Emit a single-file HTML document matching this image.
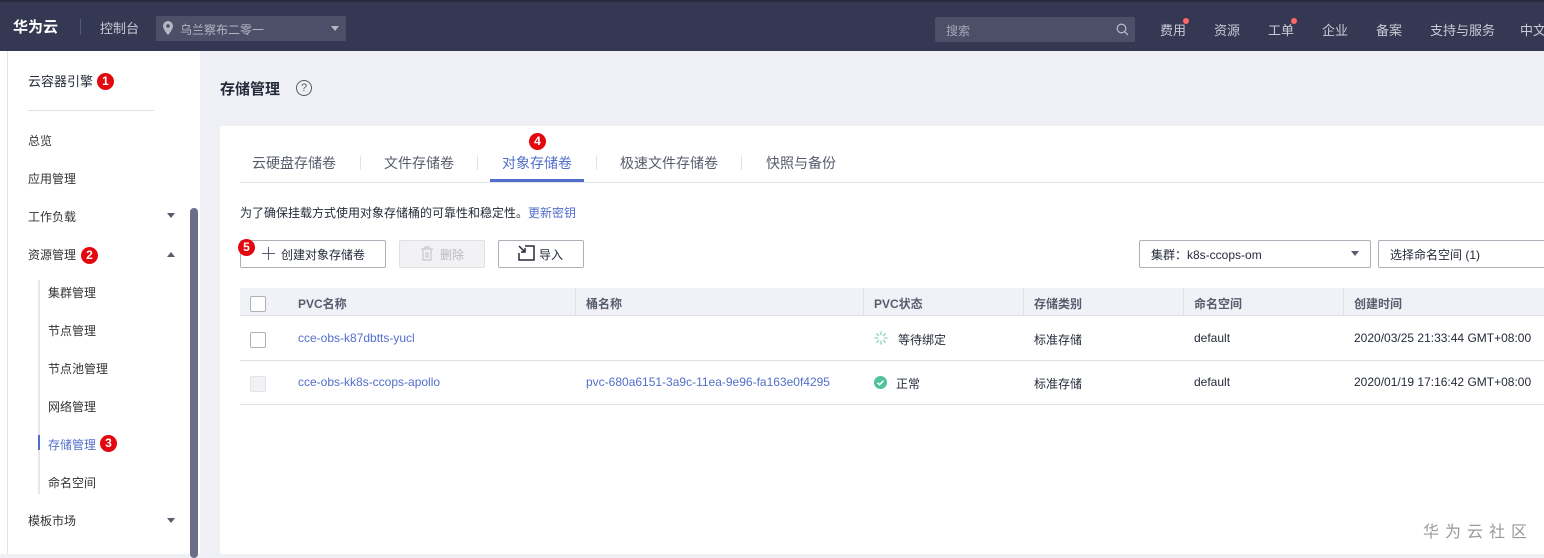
<!DOCTYPE html>
<html><head><meta charset="utf-8"><style>
*{margin:0;padding:0;box-sizing:border-box}
body{width:1544px;height:554px;overflow:hidden;background:#eef0f5;font-family:"Liberation Sans","Noto Sans CJK SC",sans-serif;font-size:12px;color:#252b3a;position:relative}
.a{position:absolute;white-space:nowrap}
.top{position:absolute;left:0;top:0;width:1544px;height:51px;background:#343852;border-top:2px solid #282b3f}
.tw{color:#c9cbd6;font-size:13px}
.bd{position:absolute;width:17px;height:17px;border-radius:50%;background:#e3070e;color:#fff;font-weight:bold;font-size:12px;text-align:center;line-height:17px}
.side{position:absolute;left:0;top:51px;width:200px;height:503px;background:#fff}
.m{position:absolute;font-size:12px;color:#333}
.card{position:absolute;left:220px;top:126px;width:1324px;height:428px;background:#fff}
.btn{position:absolute;height:28px;border:1px solid #adb0b8;background:#fff;border-radius:2px;font-size:12px;line-height:26px}
.cb{position:absolute;width:16px;height:16px;border:1px solid #adb0b8;border-radius:2px;background:#fff}
.lk{color:#526ecc}
.dv{position:absolute;width:1px;background:#e0e2e8}
.tb{position:absolute;top:27px;font-size:14px;color:#575d6c;white-space:nowrap}
</style></head><body>
<div class="top">
<div class="a" style="left:13px;top:14px;color:#fff;font-size:15px;font-weight:bold">华为云</div>
<div class="a" style="left:80px;top:17px;width:1px;height:16px;background:#555a75"></div>
<div class="a tw" style="left:100px;top:16px">控制台</div>
<div class="a" style="left:156px;top:14px;width:190px;height:25px;background:#4b4f68"></div>
<svg class="a" style="left:163px;top:19px" width="10" height="14" viewBox="0 0 10 14"><path d="M5 0a5 5 0 0 0-5 5c0 3.5 5 9 5 9s5-5.5 5-9a5 5 0 0 0-5-5z" fill="#b5b7c3"/><circle cx="5" cy="5" r="1.8" fill="#4b4f68"/></svg>
<div class="a" style="left:180px;top:19px;color:#b5b7c3;font-size:12px">乌兰察布二零一</div>
<div class="a" style="left:331px;top:24px;border:4px solid transparent;border-top:5px solid #b5b7c3"></div>
<div class="a" style="left:935px;top:15px;width:200px;height:25px;background:#4b4f68;border-radius:2px"></div>
<div class="a" style="left:946px;top:20px;color:#a5a8b8;font-size:12px">搜索</div>
<svg class="a" style="left:1116px;top:21px" width="13" height="13" viewBox="0 0 13 13"><circle cx="5.5" cy="5.5" r="4.3" fill="none" stroke="#b5b7c3" stroke-width="1.3"/><path d="M8.7 8.7L12 12" stroke="#b5b7c3" stroke-width="1.3"/></svg>
<div class="a tw" style="left:1160px;top:18px">费用</div><div class="a" style="left:1183px;top:16px;width:6px;height:6px;border-radius:50%;background:#f66"></div>
<div class="a tw" style="left:1214px;top:18px">资源</div>
<div class="a tw" style="left:1268px;top:18px">工单</div><div class="a" style="left:1291px;top:16px;width:6px;height:6px;border-radius:50%;background:#f66"></div>
<div class="a tw" style="left:1322px;top:18px">企业</div>
<div class="a tw" style="left:1376px;top:18px">备案</div>
<div class="a tw" style="left:1430px;top:18px">支持与服务</div>
<div class="a tw" style="left:1520px;top:18px">中文</div>
</div>
<div class="side">
<div class="a" style="left:7px;top:0;width:1px;height:503px;background:#e3e4ea"></div>
<div class="a" style="left:28px;top:20px;font-size:13px;color:#252b3a">云容器引擎</div>
<div class="bd" style="left:97px;top:22px">1</div>
<div class="a" style="left:28px;top:59px;width:126px;height:1px;background:#dfe1e6"></div>
<div class="m" style="left:28px;top:81px">总览</div>
<div class="m" style="left:28px;top:119px">应用管理</div>
<div class="m" style="left:28px;top:157px">工作负载</div>
<div class="a" style="left:167px;top:162px;border:4px solid transparent;border-top:5px solid #575d6c"></div>
<div class="m" style="left:28px;top:195px">资源管理</div>
<div class="bd" style="left:81px;top:196px">2</div>
<div class="a" style="left:167px;top:197px;border:4px solid transparent;border-bottom:5px solid #575d6c"></div>
<div class="a" style="left:38px;top:229px;width:2px;height:214px;background:#e6e7eb"></div>
<div class="a" style="left:38px;top:384px;width:2px;height:15px;background:#526ecc"></div>
<div class="m" style="left:48px;top:233px">集群管理</div>
<div class="m" style="left:48px;top:271px">节点管理</div>
<div class="m" style="left:48px;top:309px">节点池管理</div>
<div class="m" style="left:48px;top:347px">网络管理</div>
<div class="m" style="left:48px;top:385px;color:#526ecc">存储管理</div>
<div class="bd" style="left:100px;top:384px">3</div>
<div class="m" style="left:48px;top:423px">命名空间</div>
<div class="m" style="left:28px;top:461px">模板市场</div>
<div class="a" style="left:167px;top:467px;border:4px solid transparent;border-top:5px solid #575d6c"></div>
<div class="a" style="left:190px;top:157px;width:8px;height:350px;border-radius:4px;background:#6b6e88"></div>
</div>
<div class="a" style="left:220px;top:78px;font-size:15px;font-weight:bold;color:#252b3a">存储管理</div>
<div class="a" style="left:296px;top:80px;width:16px;height:16px;border:1.3px solid #575d6c;border-radius:50%;font-size:11px;text-align:center;line-height:14px;color:#575d6c">?</div>
<div class="card">
<div class="tb" style="left:32px">云硬盘存储卷</div>
<div class="dv" style="left:140px;top:30px;height:14px"></div>
<div class="tb" style="left:164px">文件存储卷</div>
<div class="dv" style="left:257px;top:30px;height:14px"></div>
<div class="tb" style="left:282px;color:#526ecc">对象存储卷</div>
<div class="bd" style="left:309px;top:7px">4</div>
<div class="a" style="left:270px;top:53px;width:94px;height:3px;background:#526ecc"></div>
<div class="dv" style="left:376px;top:30px;height:14px"></div>
<div class="tb" style="left:400px">极速文件存储卷</div>
<div class="dv" style="left:521px;top:30px;height:14px"></div>
<div class="tb" style="left:546px">快照与备份</div>
<div class="a" style="left:20px;top:56px;width:1304px;height:1px;background:#e3e4e9"></div>
<div class="a" style="left:20px;top:78px;color:#252b3a">为了确保挂载方式使用对象存储桶的可靠性和稳定性。<span class="lk">更新密钥</span></div>
<div class="btn" style="left:20px;top:114px;width:146px"></div>
<div class="a" style="left:42px;top:127px;width:13px;height:1.3px;background:#575d6c"></div>
<div class="a" style="left:48px;top:121px;width:1.3px;height:13px;background:#575d6c"></div>
<div class="a" style="left:61px;top:120px;color:#252b3a">创建对象存储卷</div>
<div class="bd" style="left:18px;top:113px">5</div>
<div class="btn" style="left:179px;top:114px;width:86px;background:#f2f2f4;border-color:#dfe1e6"></div>
<svg class="a" style="left:200px;top:120px" width="14" height="15" viewBox="0 0 14 15"><path d="M1 3h12M5 3V1h4v2M3 3v11h8V3M6 6v6M8 6v6" fill="none" stroke="#c6c8cf" stroke-width="1.2"/></svg>
<div class="a" style="left:220px;top:120px;color:#b8bac2">删除</div>
<div class="btn" style="left:278px;top:114px;width:86px"></div>
<svg class="a" style="left:298px;top:119px" width="17" height="16" viewBox="0 0 17 16"><path d="M7 1h9v14H1V8" fill="none" stroke="#252b3a" stroke-width="1.5"/><path d="M1 1l6 6M7 3v4H3" fill="none" stroke="#252b3a" stroke-width="1.5"/></svg>
<div class="a" style="left:319px;top:120px;color:#252b3a">导入</div>
<div class="btn" style="left:919px;top:114px;width:232px"></div>
<div class="a" style="left:931px;top:120px;color:#252b3a">集群：k8s-ccops-om</div>
<div class="a" style="left:1131px;top:125px;border:4px solid transparent;border-top:5px solid #575d6c"></div>
<div class="btn" style="left:1158px;top:114px;width:180px"></div>
<div class="a" style="left:1170px;top:120px;color:#252b3a">选择命名空间 (1)</div>
<div class="a" style="left:20px;top:162px;width:1304px;height:28px;background:#f0f2f7;border-bottom:1px solid #dfe1e6"></div>
<div class="cb" style="left:30px;top:170px"></div>
<div class="a" style="left:78px;top:169px;font-weight:bold;color:#575d6c">PVC名称</div>
<div class="dv" style="left:355px;top:162px;height:28px"></div>
<div class="a" style="left:366px;top:169px;font-weight:bold;color:#575d6c">桶名称</div>
<div class="dv" style="left:643px;top:162px;height:28px"></div>
<div class="a" style="left:654px;top:169px;font-weight:bold;color:#575d6c">PVC状态</div>
<div class="dv" style="left:803px;top:162px;height:28px"></div>
<div class="a" style="left:814px;top:169px;font-weight:bold;color:#575d6c">存储类别</div>
<div class="dv" style="left:963px;top:162px;height:28px"></div>
<div class="a" style="left:974px;top:169px;font-weight:bold;color:#575d6c">命名空间</div>
<div class="dv" style="left:1123px;top:162px;height:28px"></div>
<div class="a" style="left:1134px;top:169px;font-weight:bold;color:#575d6c">创建时间</div>
<div class="cb" style="left:30px;top:206px"></div>
<div class="a lk" style="left:78px;top:205px">cce-obs-k87dbtts-yucl</div>
<svg class="a" style="left:654px;top:205px" width="14" height="14" viewBox="0 0 14 14" stroke="#9fd9cb" stroke-width="1.6" stroke-linecap="round"><path d="M7 1v2.5M7 10.5V13M1 7h2.5M10.5 7H13M2.8 2.8l1.7 1.7M9.5 9.5l1.7 1.7M2.8 11.2l1.7-1.7M9.5 4.5l1.7-1.7"/></svg>
<div class="a" style="left:678px;top:205px">等待绑定</div>
<div class="a" style="left:814px;top:205px">标准存储</div>
<div class="a" style="left:974px;top:205px">default</div>
<div class="a" style="left:1134px;top:205px">2020/03/25 21:33:44 GMT+08:00</div>
<div class="a" style="left:20px;top:234px;width:1304px;height:1px;background:#dfe1e6"></div>
<div class="cb" style="left:30px;top:250px;background:#f2f2f4;border-color:#e3e4e9"></div>
<div class="a lk" style="left:78px;top:249px">cce-obs-kk8s-ccops-apollo</div>
<div class="a lk" style="left:366px;top:249px">pvc-680a6151-3a9c-11ea-9e96-fa163e0f4295</div>
<svg class="a" style="left:654px;top:250px" width="13" height="13" viewBox="0 0 13 13"><circle cx="6.5" cy="6.5" r="6.5" fill="#50c29c"/><path d="M3.5 6.7l2 2 4-4" fill="none" stroke="#fff" stroke-width="1.5"/></svg>
<div class="a" style="left:676px;top:249px">正常</div>
<div class="a" style="left:814px;top:249px">标准存储</div>
<div class="a" style="left:974px;top:249px">default</div>
<div class="a" style="left:1134px;top:249px">2020/01/19 17:16:42 GMT+08:00</div>
<div class="a" style="left:20px;top:278px;width:1304px;height:1px;background:#dfe1e6"></div>
<div class="a" style="left:1203px;top:392px;font-size:16px;color:#999;letter-spacing:6px">华为云社区</div>
</div>
</body></html>
